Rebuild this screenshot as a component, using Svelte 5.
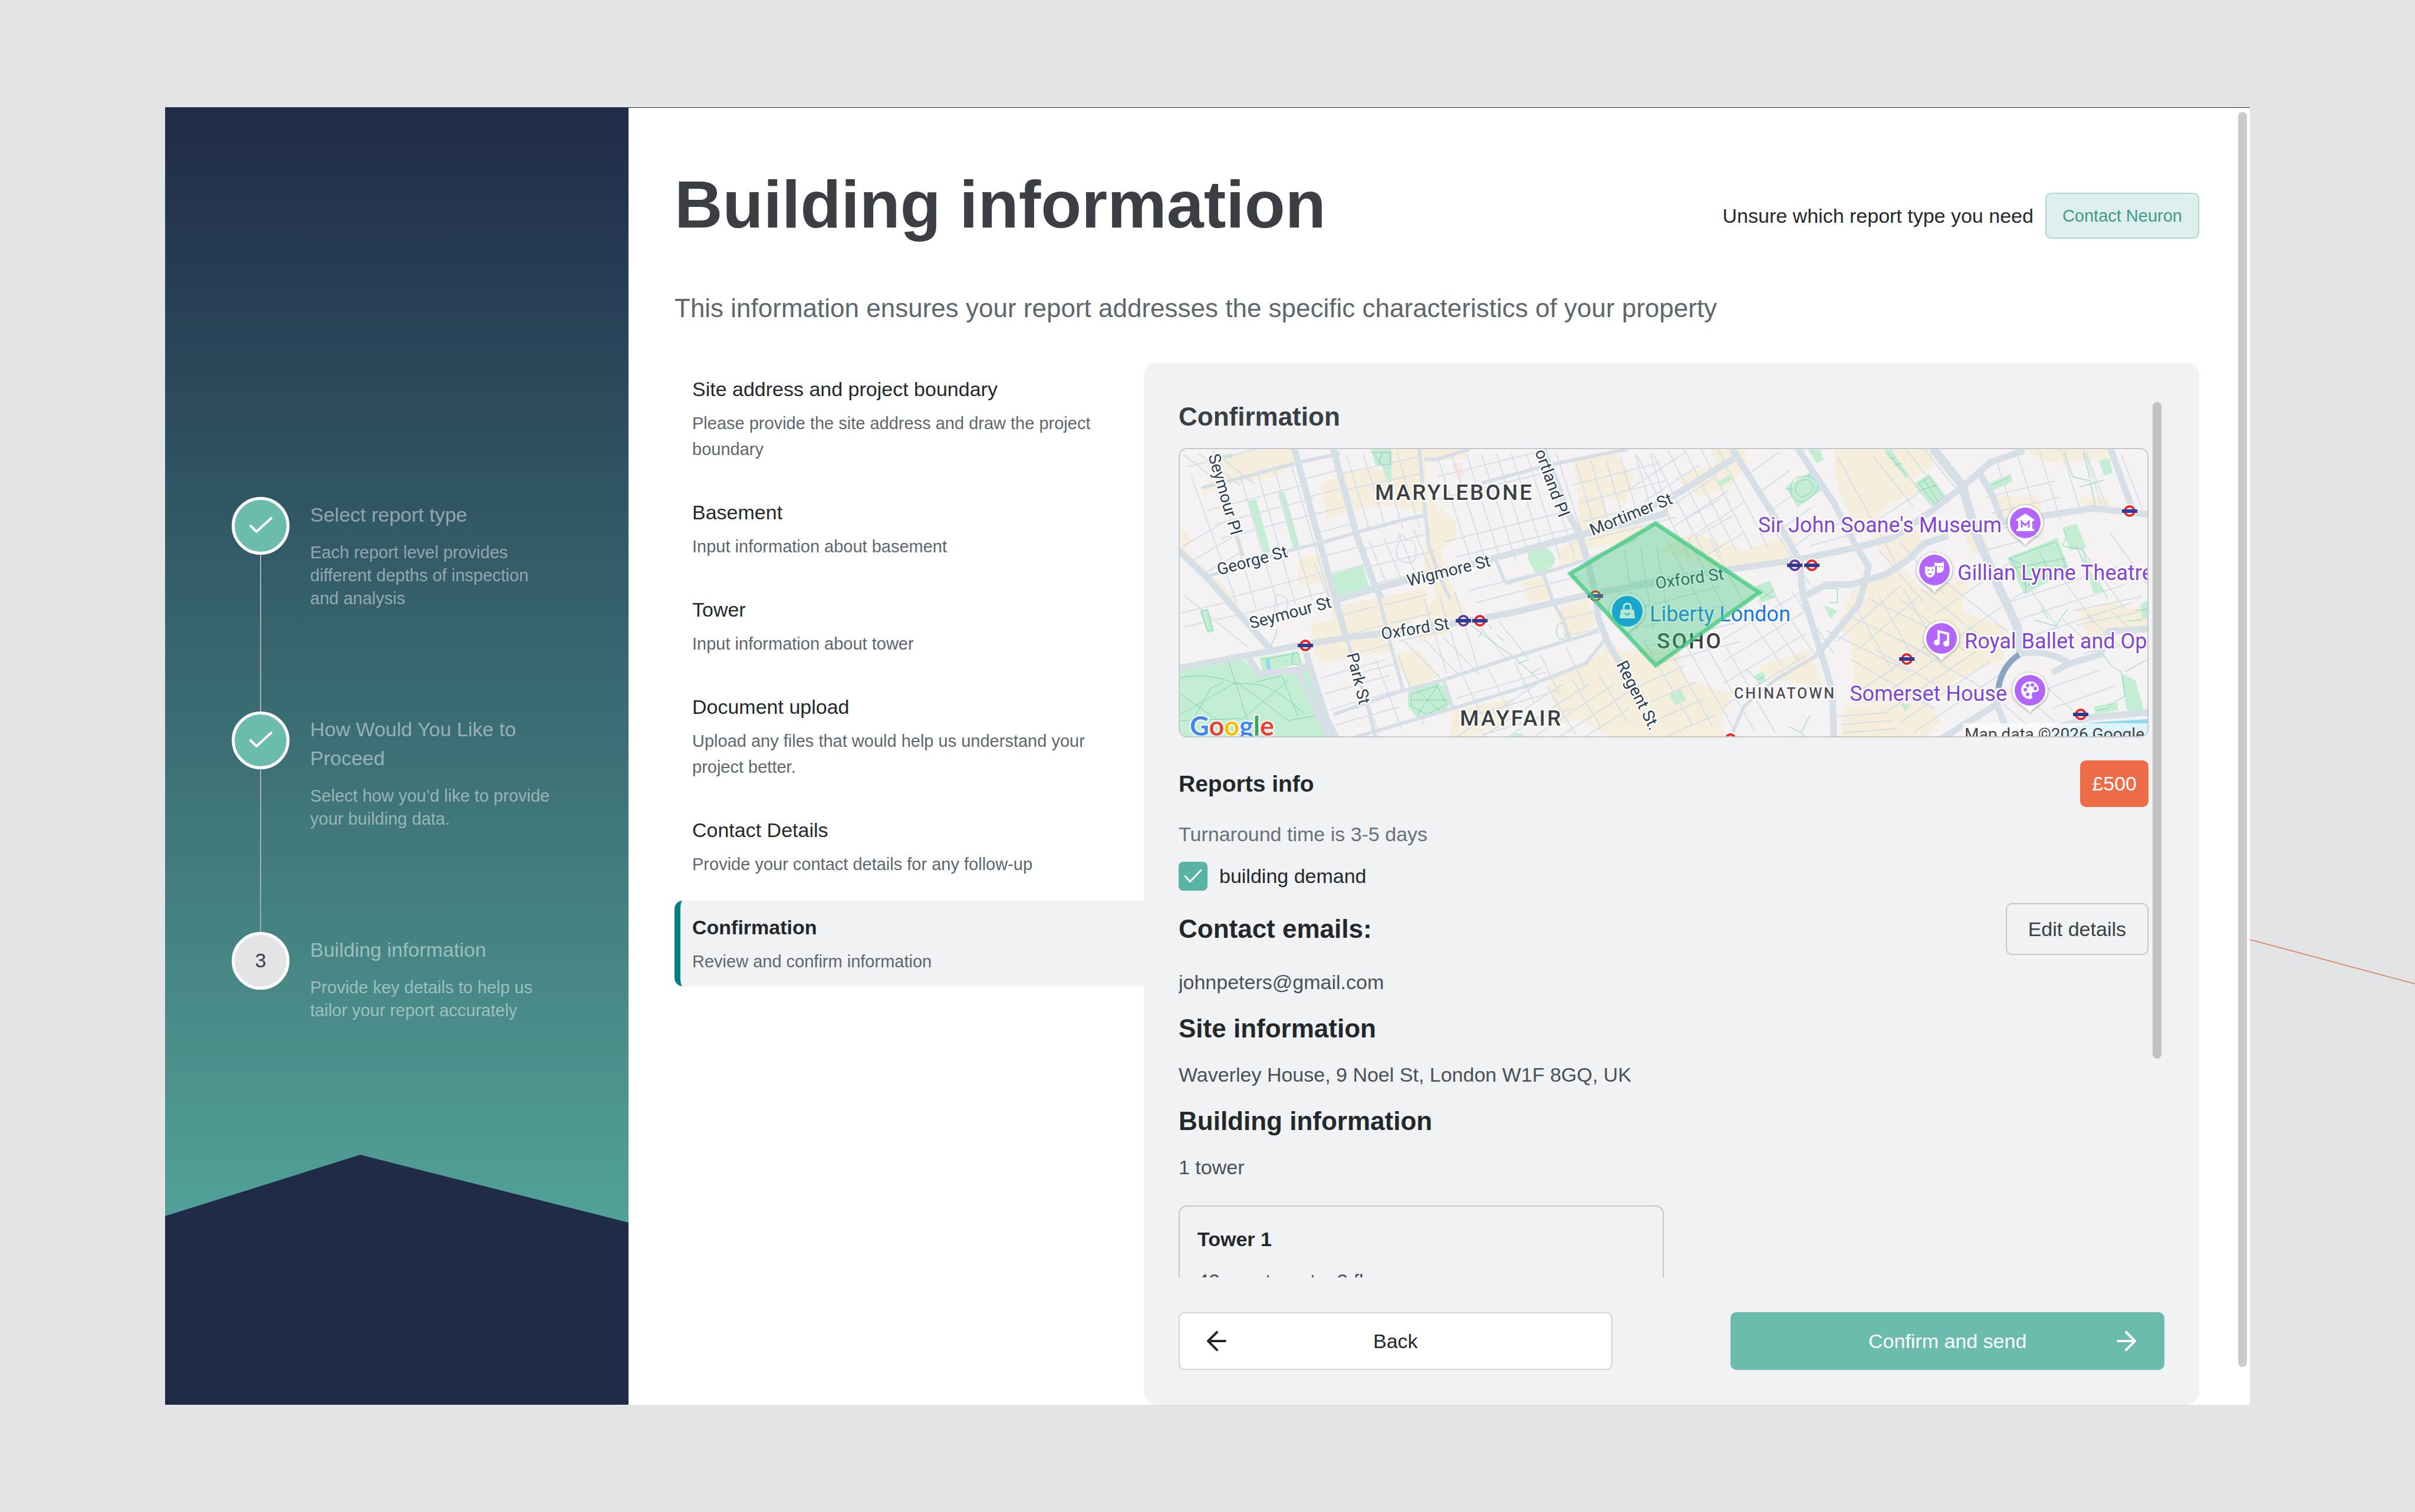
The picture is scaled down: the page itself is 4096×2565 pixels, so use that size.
<script lang="ts">
  interface Step {
    title: string;
    text: string;
    done: boolean;
  }

  interface Section {
    title: string;
    text: string;
  }

  const steps: Step[] = [
    { title: 'Select report type', text: 'Each report level provides different depths of inspection and analysis', done: true },
    { title: 'How Would You Like to Proceed', text: 'Select how you’d like to provide your building data.', done: true },
    { title: 'Building information', text: 'Provide key details to help us tailor your report accurately', done: false },
  ];

  const sections: Section[] = [
    { title: 'Site address and project boundary', text: 'Please provide the site address and draw the project boundary' },
    { title: 'Basement', text: 'Input information about basement' },
    { title: 'Tower', text: 'Input information about tower' },
    { title: 'Document upload', text: 'Upload any files that would help us understand your project better.' },
    { title: 'Contact Details', text: 'Provide your contact details for any follow-up' },
    { title: 'Confirmation', text: 'Review and confirm information' },
  ];

  let active = $state('Confirmation');
  let demand = $state(true);

  // n parallel streets, each one shifted by (sx, sy)
  function ladder(x: number, y: number, dx: number, dy: number, n: number, sx: number, sy: number): string {
    let d = '';
    for (let i = 0; i < n; i++) d += `M${x + i * sx} ${y + i * sy}l${dx} ${dy}`;
    return d;
  }

  const westStreets = [
    ladder(440, 215, 115, -48, 4, 14, 88),
    ladder(510, 590, 115, -48, 2, 14, 88),
    ladder(570, 880, 115, -48, 4, 18, 95),
    ladder(560, 185, 250, -85, 2, 12, 80),
    ladder(625, 560, 210, -80, 3, 18, 85),
    ladder(90, 150, 340, -140, 1, 0, 0),
    ladder(150, 365, 310, -130, 3, 20, 70),
    ladder(75, 540, 120, -110, 3, 30, 70),
    ladder(210, 800, 300, -130, 2, 40, 80),
    ladder(75, 780, 200, 260, 1, 0, 0),
    ladder(68, 870, 160, -60, 2, 10, 70),
    ladder(100, 200, 140, 620, 1, 0, 0),
    ladder(190, 230, 110, 620, 1, 0, 0),
    ladder(250, 190, 120, 660, 4, 52, -22),
    ladder(75, 90, 130, 160, 3, 45, -8),
    ladder(580, 90, 70, 370, 4, 52, -4),
    ladder(650, 520, 60, 230, 4, 46, -20),
    ladder(480, 620, 50, 190, 1, 0, 0),
    ladder(860, 95, 105, 520, 9, 46, -2),
    ladder(860, 200, 330, -130, 2, 4, 110),
    ladder(880, 520, 380, -150, 2, 40, 75),
    ladder(960, 760, 330, -135, 2, 20, 60),
    ladder(700, 830, 130, -50, 3, 20, 90),
    ladder(820, 800, 70, 370, 3, 48, -15),
    ladder(990, 930, 90, 180, 2, 60, -20),
    ladder(760, 1010, 110, 180, 3, 60, -10),
    ladder(500, 1190, 200, -90, 4, 14, 78),
    ladder(600, 1120, 80, 340, 3, 70, -20),
    ladder(940, 1180, 60, 200, 5, 80, -35),
    ladder(920, 1290, 280, -130, 3, 40, 90),
    ladder(920, 1480, 250, -260, 6, 80, 0),
    ladder(1250, 900, 110, -40, 2, 20, 80),
    ladder(1200, 1230, 90, 240, 4, 80, -30),
    ladder(1290, 130, 60, 330, 6, 46, -10),
    ladder(1280, 240, 270, -110, 4, 16, 90),
    ladder(1440, 560, 40, 400, 3, 50, -10),
    'M735 560q0-50 30-50t30 50v30q-5 40-35 30t-25-60zM740 520v-20q10-20 22 0v20M360 780q40 0 38 50t-40 40z',
  ].join('');

  const eastStreets = [
    ladder(0, 260, 160, -180, 5, 42, 62),
    ladder(20, 90, 150, 500, 6, 46, -8),
    ladder(150, 420, 110, -110, 3, 38, 80),
    ladder(340, 190, 90, -110, 5, 32, 90),
    ladder(500, 480, 130, -60, 2, 20, 60),
    ladder(600, 100, 180, 560, 1, 0, 0),
    ladder(420, 470, 100, 260, 1, 0, 0),
    ladder(690, 440, 180, -200, 2, 30, 90),
    ladder(720, 560, 130, 260, 2, 60, -40),
    ladder(700, 90, 120, 260, 4, 50, -10),
    ladder(1030, 300, 200, -80, 3, 14, 80),
    ladder(1060, 120, 60, 330, 5, 62, -20),
    ladder(1320, 90, 60, 270, 2, 100, 0),
    ladder(1030, 560, 160, -70, 1, 0, 0),
    ladder(1090, 820, 320, -180, 3, 20, 90),
    ladder(1100, 620, 140, 330, 4, 95, -50),
    ladder(1280, 860, 200, -70, 4, 10, 70),
    ladder(1250, 900, 100, 160, 3, 70, -20),
    ladder(20, 850, 240, -110, 4, 20, 90),
    ladder(110, 520, 130, 420, 3, 60, -10),
    ladder(270, 1000, 240, -250, 4, 0, 110),
    ladder(320, 830, 120, 300, 4, 50, -20),
    ladder(0, 1250, 160, -120, 4, 30, 80),
    ladder(40, 1000, 140, 420, 5, 60, 10),
    ladder(600, 1010, 180, -270, 2, 60, 40),
    ladder(570, 960, 240, 200, 3, 60, -80),
    ladder(650, 830, 110, 330, 3, 70, -40),
    ladder(660, 1260, 260, -300, 5, 40, 50),
    ladder(640, 1100, 240, 240, 3, 70, -50),
    ladder(780, 800, 190, 260, 3, 60, -50),
    ladder(600, 1380, 150, -20, 3, 10, 40),
    ladder(880, 880, 220, -260, 2, 50, 130),
    ladder(1080, 1320, 100, 150, 3, 50, -60),
    ladder(1180, 1260, 180, -110, 2, 40, 80),
  ].join('');

  const pins = [
    { x: 1434, y: 124, kind: 'museum' },
    { x: 1280, y: 204, kind: 'masks' },
    { x: 1292, y: 320, kind: 'note' },
    { x: 1442, y: 408, kind: 'palette' },
  ];

  const tubes = [
    { x: 213, y: 332, color: '#ee2524' },
    { x: 481, y: 290, color: '#6a38a4' },
    { x: 509, y: 290, color: '#ee2524' },
    { x: 705, y: 248, color: '#ee2524' },
    { x: 1043, y: 196, color: '#6a38a4' },
    { x: 1072, y: 196, color: '#ee2524' },
    { x: 1233, y: 355, color: '#ee2524' },
    { x: 1528, y: 449, color: '#ee2524' },
    { x: 1611, y: 104, color: '#ee2524' },
    { x: 934, y: 491, color: '#ee2524' },
  ];
</script>

<div class="shell">
  <svg class="trace" viewBox="0 0 280 80" aria-hidden="true">
    <path d="M0 4 280 79" fill="none" stroke="#e07650" stroke-width="1.4" />
  </svg>

  <div class="modal">
    <aside class="sidebar">
      <svg class="hill" viewBox="0 0 786 424" preserveAspectRatio="none" aria-hidden="true">
        <path d="M0 104 331 0 786 115V424H0Z" fill="#202c47" />
      </svg>
      <ol class="steps">
        {#each steps as step, i}
          <li class="step">
            <div class="track">
              <span class="bullet" class:done={step.done}>
                {#if step.done}
                  <svg width="40" height="40" viewBox="0 0 40 40" aria-hidden="true">
                    <path d="M3 20 13 30 38 7" fill="none" stroke="#fff" stroke-width="4" stroke-linecap="round" stroke-linejoin="round" />
                  </svg>
                {:else}
                  {i + 1}
                {/if}
              </span>
              {#if i < steps.length - 1}
                <span class="line"></span>
              {/if}
            </div>
            <div class="step-text">
              <h3>{step.title}</h3>
              <p>{step.text}</p>
            </div>
          </li>
        {/each}
      </ol>
    </aside>

    <main class="main">
      <header class="header">
        <h1>Building information</h1>
        <div class="help">
          <span>Unsure which report type you need</span>
          <button type="button" class="contact">Contact Neuron</button>
        </div>
      </header>
      <p class="lead">This information ensures your report addresses the specific characteristics of your property</p>

      <div class="body">
        <nav class="nav">
          {#each sections as section}
            <a
              href="#{section.title}"
              class="nav-item"
              class:active={active === section.title}
              onclick={() => (active = section.title)}
            >
              <span class="nav-title">{section.title}</span>
              <span class="nav-desc">{section.text}</span>
            </a>
          {/each}
        </nav>

        <section class="panel">
          <div class="viewport">
            <div class="scroll">
              <h2>Confirmation</h2>

              <div class="map">
                <svg viewBox="0 -1 1641 487" preserveAspectRatio="xMidYMid slice" role="img" aria-label="Map of the project boundary">
                  <rect y="-1" width="1641" height="492" fill="#f4f2f3" />

                  <g transform="matrix(.548 0 0 .3445 -35 -23)">
                    <g fill="#f6eedc">
                      <path d="M180 100 290 75 420 60 425 130 360 200 200 240 130 300 140 240 210 190Z" />
                      <path d="M500 230 640 150 720 180 830 160 830 380 720 340 610 360 520 410Z" />
                      <path d="M720 65H960L940 110 830 130 800 240 720 250Z" />
                      <path d="M66 440 100 510 80 560 200 740 260 860 220 800 66 560Z" />
                      <path d="M430 610 490 580 530 700 620 640 560 830 660 800 830 750 830 860 700 1000 480 1080 470 930 540 900 500 720 430 740Z" />
                      <path d="M830 300 920 420 920 500 870 560 900 720 950 860 900 960 800 1020 820 860 860 780 820 640Z" />
                      <path d="M480 1040 700 1000 740 1050 500 1120Z" />
                      <path d="M1120 720 1190 690 1220 800 1140 820ZM1230 560 1300 500 1310 600 1240 650ZM1220 850 1330 800 1350 930 1260 1000Z" />
                      <path d="M1280 120 1400 65 1470 200 1440 330 1380 300 1390 470 1500 420 1500 500 1320 560 1300 450 1300 300Z" />
                      <path d="M1200 1190 1320 1120 1400 1020 1480 1100 1568 1130V1485H1400L1300 1390 1240 1420Z" />
                      <path d="M910 1350 1100 1290 1080 1400 960 1485H900ZM720 1080 800 1050 870 1180 780 1240Z" />
                    </g>
                    <g fill="#c3eed4">
                      <path d="M60 1150 210 1110 260 1100 310 1180 430 1170 500 1410 530 1485H60Z" />
                      <path d="M310 1090 430 1060 440 1120 320 1160ZM440 1150 460 1145 510 1360 490 1380Z" />
                      <path d="M275 320 300 310 345 570 325 580ZM368 280 388 275 435 540 415 550Z" />
                      <path d="M535 680 630 635 652 750 555 790ZM125 860 150 850 172 960 150 970Z" />
                      <path d="M655 65H720L720 225H705L690 150 670 145ZM195 95 225 85 228 105 200 112Z" />
                      <path d="M1140 600Q1145 550 1185 545 1225 560 1225 610 1220 660 1165 675Z" />
                      <path d="M770 1260 860 1210 890 1240 900 1320 880 1360 800 1390 770 1330Z" />
                      <path d="M1085 1485Q1110 1440 1140 1485Z" />
                    </g>
                    <path d="M905 135 935 130 945 190 925 215Z" fill="#fce4e4" />
                    <path d="M330 1100 342 1095 345 1150 335 1155Z" fill="#90daee" />
                    <g class="road minor"><path d={westStreets} /></g>
                    <g class="road path">
                      <path d="M66 1190Q150 1160 240 1220 300 1210 340 1240 400 1290 450 1370M66 1270 260 1485M66 1370 240 1210 400 1400 510 1370M100 1410 160 1240 200 1210M215 1110 240 1230 290 1485M300 1210 380 1180 430 1380M400 1200 260 1390 66 1400" />
                      <path d="M780 1270 860 1230 890 1320 830 1370 780 1330ZM790 1240 880 1370M865 1220 800 1370M780 1300H890" />
                      <path d="M965 930 1030 1010 1090 1080 1120 1120 1180 1205M1000 960 990 990M1020 930 1030 950M1045 980 1070 1010M1110 1120 1145 1100M1150 1170 1180 1140" />
                      <path d="M660 80 690 140H715V80ZM690 80 680 140M130 860 150 855 165 955 150 960Z M1230 960Q1230 920 1245 920T1260 960 1245 1000 1230 960Z" />
                      <path d="M365 950Q360 1000 340 1045M415 1065 410 1120 440 1130 430 1065ZM320 1100 420 1070" />
                    </g>
                    <g class="road mid">
                      <path d="M130 255 230 215 430 130 560 85M150 690 410 560 500 525 620 470 760 410 820 390" />
                      <path d="M805 60 820 330 835 540 870 700 900 800M540 1370 740 1260 880 1200 1090 1090 1360 960M610 1480 910 1340 1140 1230 1320 1120 1380 1000" />
                      <path d="M1000 230 1210 140 1450 65M820 115H855L960 65M880 1200 910 1340M1190 680 1220 820 1250 900 1270 1000M1040 600 1070 720M1070 725 1220 660 1340 600 1480 500" />
                      <path d="M580 990 640 1300 670 1485M680 790 720 1050 755 1250M240 490 260 590" />
                    </g>
                    <g class="road major">
                      <path d="M60 560 150 700 345 1050M60 1142 270 1080 450 1025 590 990 720 965 900 925 1090 870 1220 820 1340 775 1568 715" />
                      <path d="M418 60 500 540 580 1000M538 60 610 480 670 750 690 800M540 810 670 750 1040 600 1200 530 1320 480 1568 380" />
                      <path d="M1187 60 1270 390 1300 480 1330 640 1350 780 1360 900 1390 1020 1430 1130 1500 1330 1560 1490" />
                      <path d="M450 1040 470 1150 520 1400 550 1490M430 1150 500 1400 530 1490M270 1080 310 1170 430 1150 470 1120" />
                    </g>
                  </g>

                  <g transform="matrix(.5873 0 0 .3445 763 -23)">
                    <g fill="#f6eedc">
                      <path d="M590 65H870L880 150 820 200 830 280 740 340 700 440 640 400 600 250Z" />
                      <path d="M130 200 290 110 330 150 290 250 200 300ZM80 560 180 470 330 560 480 480 480 610 260 660Z" />
                      <path d="M230 65H330L340 130 270 190ZM700 490 830 460 850 560 760 640Z" />
                      <path d="M640 760 780 640 850 760 980 700 960 860 1080 940 1080 1100 940 1200 900 1290 650 1320 640 1000 600 940Z" />
                      <path d="M0 1050 140 1040 160 1200 300 1270 260 1420 290 1485H0Z" />
                      <path d="M1290 850 1400 820 1500 860V950L1320 980ZM1050 300 1180 290 1190 360 1060 420ZM1300 300 1390 310 1380 360 1310 360Z" />
                      <path d="M620 1330 860 1310 900 1400 850 1485H610ZM960 460 1010 440 1040 560 990 580ZM370 1130 520 1050 560 1240 400 1190Z" />
                      <path d="M1140 65 1390 65 1380 110 1200 130Z" />
                    </g>
                    <g fill="#c3eed4">
                      <path d="M450 250 520 180 560 260 485 350ZM515 65H550L560 115 540 135ZM735 65H755L810 200 795 205Z" />
                      <path d="M820 235 865 185 915 300 875 345ZM1040 230 1100 185 1105 225 1045 270ZM1355 120 1385 110 1395 180 1370 195Z" />
                      <path d="M1090 600 1235 500 1270 660 1140 780ZM1250 450 1290 430 1320 550 1270 560ZM1300 560 1340 700 1370 760 1340 775Z" />
                      <path d="M360 740 405 710 425 790 380 820ZM560 830 600 860 580 900ZM115 1270 145 1240 165 1300 130 1325Z" />
                      <path d="M1420 1170 1460 1200 1485 1350H1435ZM1340 1330 1410 1310 1410 1350 1345 1370ZM360 1180 385 1160 395 1210 375 1225ZM780 1315 815 1325 795 1355Z" />
                      <path d="M255 225 290 190 295 215 260 250ZM1475 830 1500 800V900L1480 900Z" />
                    </g>
                    <path d="M1180 1485 1330 1410 1500 1393V1490H1180Z" fill="#90daee" />
                    <g class="road minor"><path d={eastStreets} /></g>
                    <g class="road path">
                      <path d="M465 240Q470 200 510 195 545 210 545 250 530 310 490 325 460 300 465 240ZM480 245Q490 210 515 215 530 230 530 255 515 300 495 300 475 280 480 245ZM450 260H470M540 245 556 240M520 180 518 200" />
                      <path d="M835 230 865 200 905 300 880 335ZM850 215 890 320M830 270 890 240M1100 600 1230 520 1260 640 1145 740ZM1095 600 1140 640 1145 770M1180 560 1220 690M1110 650 1260 600" />
                      <path d="M1255 80 1280 200 1330 220 1345 345M1310 80 1330 210M1300 250 1370 215M1250 460Q1270 480 1250 540L1310 560 1330 680M1290 540 1310 620M1350 700 1380 800" />
                      <path d="M740 80 800 190M750 110 770 105M765 140 785 135M370 740 410 800M380 800 415 760M1170 905 1230 935 1265 850M1190 850 1210 900M1370 1080 1390 1130 1420 1160 1430 1280 1380 1330" />
                      <path d="M1430 1160 1495 1100M1350 1350 1380 1340M520 1375 495 1460M460 1430 495 1460 510 1485M570 750H600V820H575M335 1145 370 1200 390 1180M1045 240 1100 200M1460 860 1495 850M1435 910 1480 905" />
                    </g>
                    <g class="road major">
                      <path d="M295 60 420 400 490 610 500 780 550 1050 585 1250 590 1490M485 60 590 330 650 530 690 640 680 720 660 830 540 1080" />
                      <path d="M0 400 140 280 300 110M0 735 270 660 480 610 650 550 760 500 870 370 960 250 1040 130 1140 70" />
                      <path d="M500 790 570 730 640 730 740 680 810 600 850 530 920 490M1080 420 1200 390 1340 355 1500 385M1388 60 1450 350" />
                      <path d="M1010 180 1050 300 1080 440M1130 1070Q1210 1050 1270 1120L1360 1075 1385 960 1500 950M1270 1120 1220 1165M900 1490 1060 1320 1065 1240M1060 1320 1100 1490M1200 1450 1330 1385 1500 1360" />
                    </g>
                    <g class="road trunk"><path d="M875 60 960 240 1000 480 1060 720 1120 940 1130 1070" /></g>
                    <g class="road mid"><path d="M540 1080 420 1200 330 1330 290 1490M960 250 1020 180" /></g>
                    <path class="tunnel" d="M1125 1075Q1075 1130 1065 1240" />
                  </g>

                  {#each tubes as tube}
                    <g transform="translate({tube.x} {tube.y})">
                      <circle r="12" fill="#fff" />
                      <circle r="8" fill="#fff" stroke={tube.color} stroke-width="4" />
                      <rect x="-13" y="-3" width="26" height="6" fill="#2f3a93" />
                    </g>
                  {/each}

                  <g class="label street">
                    <text transform="translate(48 10) rotate(74)">Seymour Pl</text>
                    <text transform="translate(66 213) rotate(-15)">George St</text>
                    <text transform="translate(121 304) rotate(-15)">Seymour St</text>
                    <text transform="translate(283 347) rotate(76)">Park St</text>
                    <text transform="translate(643 116) rotate(70)" text-anchor="end">Portland Pl</text>
                    <text transform="translate(388 232) rotate(-14)">Wigmore St</text>
                    <text transform="translate(343 322) rotate(-9)">Oxford St</text>
                    <text transform="translate(700 146) rotate(-22)">Mortimer St</text>
                    <text transform="translate(808 236) rotate(-8)">Oxford St</text>
                    <text transform="translate(740 364) rotate(63)">Regent St.</text>
                  </g>
                  <g class="label area">
                    <text x="331" y="85">MARYLEBONE</text>
                    <text x="475" y="468">MAYFAIR</text>
                    <text x="809" y="337">SOHO</text>
                    <text class="small" x="940" y="422">CHINATOWN</text>
                  </g>
                  <g class="label place">
                    <text x="1394" y="140" text-anchor="end">Sir John Soane's Museum</text>
                    <text x="1319" y="221">Gillian Lynne Theatre</text>
                    <text x="1331" y="337">Royal Ballet and Opera</text>
                    <text x="1403" y="426" text-anchor="end">Somerset House</text>
                    <text class="shop" x="797" y="291">Liberty London</text>
                  </g>

                  {#each pins as pin}
                    <g class="pin" transform="translate({pin.x} {pin.y})">
                      <path d="M0 39C-5 27-30 22-30 0A30 30 0 0 1 30 0C30 22 5 27 0 39Z" fill="#fff" />
                      <circle r="26" fill="#b366ff" />
                      {#if pin.kind === 'museum'}
                        <path d="M0-16 15-6V-3H12V10H15V14H-15V10H-12V-3H-15V-6Z" fill="#fff" />
                        <path d="M-6 8V-2L0 4 6-2V8" fill="none" stroke="#b366ff" stroke-width="3" />
                      {:else if pin.kind === 'masks'}
                        <path d="M0-13Q8-10 16-14V-4Q16 4 8 5H4V-7H0ZM-16-7Q-8-3 1-7V3Q0 12-8 13-15 12-16 3Z" fill="#fff" />
                        <path d="M-12 0h3M-5 0h3M7-6h2M12-6h2M-10 6q3 3 5 0" stroke="#b366ff" stroke-width="2" fill="none" />
                      {:else if pin.kind === 'note'}
                        <path d="M-5 7V-12L11-8V8" fill="none" stroke="#fff" stroke-width="4" />
                        <circle cx="-8" cy="7" r="5" fill="#fff" />
                        <circle cx="8" cy="9" r="5" fill="#fff" />
                      {:else}
                        <path d="M0-15A15 15 0 1 0 0 15Q6 14 3 8 2 3 8 3 15 3 15-2 13-15 0-15Z" fill="#fff" />
                        <g fill="#b366ff"><circle cx="-8" cy="-1" r="3" /><circle cx="-4" cy="-8" r="3" /><circle cx="4" cy="-9" r="3" /><circle cx="9" cy="-3" r="3" /><circle cx="-4" cy="7" r="3" /></g>
                      {/if}
                    </g>
                  {/each}
                  <g class="pin" transform="translate(759 274)">
                    <path d="M0 39C-5 27-30 22-30 0A30 30 0 0 1 30 0C30 22 5 27 0 39Z" fill="#fff" />
                    <circle r="26" fill="#0091ff" />
                    <path d="M-11-3H11L13 12H-13Z" fill="#fff" />
                    <path d="M-6-3V-7Q-6-13 0-13T6-7V-3" fill="none" stroke="#fff" stroke-width="3" />
                    <path d="M-4 3Q0 9 4 3" fill="none" stroke="#0091ff" stroke-width="2" />
                  </g>

                  <path d="M807 125 983 242 807 366 662 210Z" fill="#3fc97f" fill-opacity=".38" stroke="#3fc97f" stroke-opacity=".75" stroke-width="7" />

                  <text class="google" x="17" y="485"><tspan fill="#4285f4">G</tspan><tspan fill="#ea4335">o</tspan><tspan fill="#fbbc04">o</tspan><tspan fill="#4285f4">g</tspan><tspan fill="#34a853">l</tspan><tspan fill="#ea4335">e</tspan></text>
                  <rect x="1329" y="464" width="316" height="27" fill="#fff" fill-opacity=".7" />
                  <text class="credit" x="1636" y="492" text-anchor="end">Map data ©2026 Google</text>
                </svg>
              </div>

              <div class="row">
                <h4>Reports info</h4>
                <span class="price">£500</span>
              </div>
              <p class="muted">Turnaround time is 3-5 days</p>
              <label class="check">
                <span class="box">
                  <input type="checkbox" bind:checked={demand} />
                  <svg width="48" height="48" viewBox="0 0 48 48" aria-hidden="true">
                    <path d="M11 24 19 33 37 14" fill="none" stroke="#fff" stroke-width="3" stroke-linecap="round" stroke-linejoin="round" />
                  </svg>
                </span>
                building demand
              </label>
              <div class="row">
                <h2>Contact emails:</h2>
                <button type="button" class="edit">Edit details</button>
              </div>
              <p>johnpeters@gmail.com</p>
              <h2>Site information</h2>
              <p>Waverley House, 9 Noel St, London W1F 8GQ, UK</p>
              <h2>Building information</h2>
              <p>1 tower</p>
              <div class="card">
                <h5>Tower 1</h5>
                <p>42 apartments, 2 floors</p>
              </div>
            </div>
            <span class="thumb"></span>
          </div>

          <footer class="actions">
            <button type="button" class="btn back">
              <svg width="34" height="34" viewBox="0 0 34 34" aria-hidden="true">
                <path d="M31 17H3M17 2 2 17 17 32" fill="none" stroke="currentColor" stroke-width="4" stroke-linecap="round" stroke-linejoin="round" />
              </svg>
              <span>Back</span>
            </button>
            <button type="button" class="btn send">
              <span></span>
              <span>Confirm and send</span>
              <svg width="34" height="34" viewBox="0 0 34 34" aria-hidden="true">
                <path d="M3 17H31M17 2 32 17 17 32" fill="none" stroke="currentColor" stroke-width="4" stroke-linecap="round" stroke-linejoin="round" />
              </svg>
            </button>
          </footer>
        </section>
      </div>
    </main>
    <span class="thumb page-thumb"></span>
  </div>
</div>

<style>
  :global(body) {
    margin: 0;
    background: #e2e4e6;
  }

  h1, h2, h3, h4, h5, p, ol {
    margin: 0;
    padding: 0;
  }

  button {
    font: inherit;
    cursor: pointer;
  }

  .shell {
    position: relative;
    display: flex;
    height: 100vh;
    padding: 182px 280px;
    box-sizing: border-box;
    background: #e2e4e6;
    color: #24282b;
    font-family: "Liberation Sans", Helvetica, Arial, sans-serif;
    font-size: 34px;
    line-height: 51px;
  }

  .trace {
    position: absolute;
    right: 0;
    top: 62%;
    width: 280px;
    height: 80px;
  }

  .modal {
    position: relative;
    flex: 1;
    display: grid;
    grid-template-columns: 786px 1fr;
    grid-template-rows: minmax(0, 1fr);
    border-top: 1px solid #202c47;
    background: #fff;
    overflow: hidden;
  }

  /* sidebar */
  .sidebar {
    position: relative;
    display: flex;
    flex-direction: column;
    justify-content: center;
    padding: 10px 120px 0 113px;
    background: linear-gradient(180deg, #202b47 0%, #2f5362 28%, #4c928d 75%, #51a299 86%, #5bb3a5 100%);
  }

  .hill {
    position: absolute;
    left: 0;
    bottom: 0;
    width: 100%;
    height: 424px;
  }

  .steps {
    list-style: none;
  }

  .step {
    display: flex;
    gap: 35px;
  }

  .track {
    display: flex;
    flex-direction: column;
    align-items: center;
  }

  .bullet {
    display: flex;
    align-items: center;
    justify-content: center;
    width: 98px;
    height: 98px;
    box-sizing: border-box;
    border: 5px solid #fff;
    border-radius: 50%;
    background: #e2e4e6;
    color: #3b3f44;
  }

  .bullet.done {
    background: #6cbcae;
  }

  .line {
    flex: 1;
    width: 2px;
    background: #a9adb3;
  }

  .step-text {
    flex: 1;
    padding: 6px 0 172px;
    color: rgba(255, 255, 255, 0.47);
  }

  .step:last-child .step-text {
    padding-bottom: 0;
  }

  .step-text h3 {
    margin-bottom: 20px;
    font-size: 34px;
    font-weight: 400;
    line-height: 49px;
  }

  .step-text p {
    font-size: 29px;
    line-height: 39px;
  }

  /* main column */
  .main {
    display: flex;
    flex-direction: column;
    padding: 106px 86px 0 78px;
    min-width: 0;
  }

  .header {
    display: flex;
    align-items: flex-end;
    justify-content: space-between;
    margin-bottom: 85px;
  }

  h1 {
    color: #3b3f44;
    font-size: 113px;
    line-height: 116px;
  }

  .help {
    display: flex;
    align-items: center;
    gap: 20px;
  }

  .contact {
    height: 78px;
    padding: 0 27px;
    border: 2px solid #abd9d0;
    border-radius: 10px;
    background: #ddf0ed;
    color: #469688;
    font-size: 29px;
  }

  .lead {
    margin-bottom: 59px;
    color: #5e666e;
    font-size: 44px;
    line-height: 66px;
  }

  .body {
    flex: 1;
    display: grid;
    grid-template-columns: 796px 1fr;
    grid-template-rows: minmax(0, 1fr);
    min-height: 0;
  }

  .nav {
    display: flex;
    flex-direction: column;
    gap: 20px;
  }

  .nav-item {
    display: flex;
    flex-direction: column;
    gap: 10px;
    padding: 20px;
    border-left: 10px solid transparent;
    border-radius: 14px 0 0 14px;
    color: #24282b;
    text-decoration: none;
  }

  .nav-item.active {
    border-left-color: #04807c;
    background: #f0f2f4;
  }

  .active .nav-title {
    font-weight: 700;
  }

  .nav-desc {
    color: #5e666e;
    font-size: 29px;
    line-height: 44px;
  }

  /* confirmation panel */
  .panel {
    display: flex;
    flex-direction: column;
    gap: 59px;
    padding: 60px 59px 59px;
    border-radius: 22px;
    background: #f0f2f4;
    min-width: 0;
  }

  .viewport {
    position: relative;
    flex: 1;
    min-height: 0;
  }

  .scroll {
    display: flex;
    flex-direction: column;
    gap: 21px;
    height: 100%;
    padding-right: 27px;
    box-sizing: border-box;
    overflow: hidden;
    color: #495057;
  }

  .scroll > * {
    flex-shrink: 0;
  }

  .thumb {
    position: absolute;
    top: 7px;
    right: 5px;
    width: 15px;
    height: calc(75% - 5px);
    border-radius: 8px;
    background: #c0c1c1;
  }

  .page-thumb {
    height: calc(97% - 5px);
    background: #cacbcb;
  }

  h2, h4, h5 {
    color: #24282b;
    font-size: 44px;
    line-height: 64px;
  }

  .scroll > h2:first-child {
    color: #3b3f44;
  }

  h4 {
    font-size: 39px;
  }

  h5 {
    font-size: 34px;
    line-height: 51px;
  }

  .map {
    height: 491px;
    margin-bottom: 18px;
    box-sizing: border-box;
    border: 2px solid #c5c6c8;
    border-radius: 14px;
    overflow: hidden;
  }

  .map svg {
    display: block;
    width: 100%;
    height: 100%;
  }

  .road path, .tunnel {
    fill: none;
    stroke: #d7dfe6;
    stroke-linejoin: round;
    vector-effect: non-scaling-stroke;
  }

  .minor path { stroke-width: 2; }
  .mid path { stroke-width: 6; }
  .major path { stroke-width: 11; }
  .trunk path { stroke-width: 15; }
  .path path { stroke: #7dd0b0; stroke-width: 1; }
  .tunnel { stroke: #8aa5c2; stroke-width: 10; }

  .label {
    font-family: Roboto, "Liberation Sans", sans-serif;
    stroke: #fff;
    stroke-width: 5;
    stroke-linejoin: round;
    paint-order: stroke;
  }

  .street {
    fill: #2d3e50;
    font-size: 28px;
  }

  .area {
    fill: #3c4043;
    font-size: 37px;
    font-weight: 500;
    letter-spacing: 3px;
  }

  .area .small {
    fill: #4d5156;
    font-size: 25px;
  }

  .place {
    fill: #8243d6;
    font-size: 36px;
  }

  .place .shop {
    fill: #1a73e8;
  }

  .pin {
    filter: drop-shadow(0 1px 2px rgba(0, 0, 0, 0.4));
  }

  .google {
    font-family: Lato, sans-serif;
    font-size: 45px;
    font-weight: 700;
    stroke: #fff;
    stroke-width: 4;
    paint-order: stroke;
  }

  .credit {
    fill: #3f4245;
    font-family: Roboto, sans-serif;
    font-size: 28px;
  }

  .row {
    display: flex;
    align-items: center;
    justify-content: space-between;
  }

  .price {
    padding: 14px 20px;
    border-radius: 10px;
    background: #ee6c47;
    color: #fff;
  }

  .muted {
    color: #69717a;
  }

  .check {
    display: flex;
    align-items: center;
    gap: 20px;
    height: 49px;
    color: #24282b;
  }

  .box {
    display: grid;
    width: 49px;
    height: 49px;
  }

  .box input, .box svg {
    grid-area: 1 / 1;
    width: 49px;
    height: 49px;
    margin: 0;
  }

  .box input {
    appearance: none;
    border-radius: 8px;
    background: #fff;
  }

  .box input:checked {
    background: #58b3a5;
  }

  .box svg {
    pointer-events: none;
  }

  .edit {
    height: 88px;
    padding: 0 36px;
    border: 2px solid #c5c6c8;
    border-radius: 10px;
    background: transparent;
    color: #3b3f44;
  }

  .card {
    display: flex;
    flex-direction: column;
    gap: 20px;
    width: 50%;
    margin-top: 18px;
    padding: 30px;
    box-sizing: border-box;
    border: 2px solid #c5c6c8;
    border-radius: 14px;
  }

  .actions {
    display: flex;
    justify-content: space-between;
  }

  .btn {
    display: grid;
    grid-template-columns: 34px 1fr 34px;
    align-items: center;
    width: 44%;
    height: 98px;
    padding: 0 46px;
    border: 2px solid transparent;
    border-radius: 10px;
  }

  .back {
    border-color: #d3d4d5;
    background: #fff;
    color: #24282b;
  }

  .send {
    background: #6cbcae;
    border-color: #6cbcae;
    color: #fff;
  }
</style>
